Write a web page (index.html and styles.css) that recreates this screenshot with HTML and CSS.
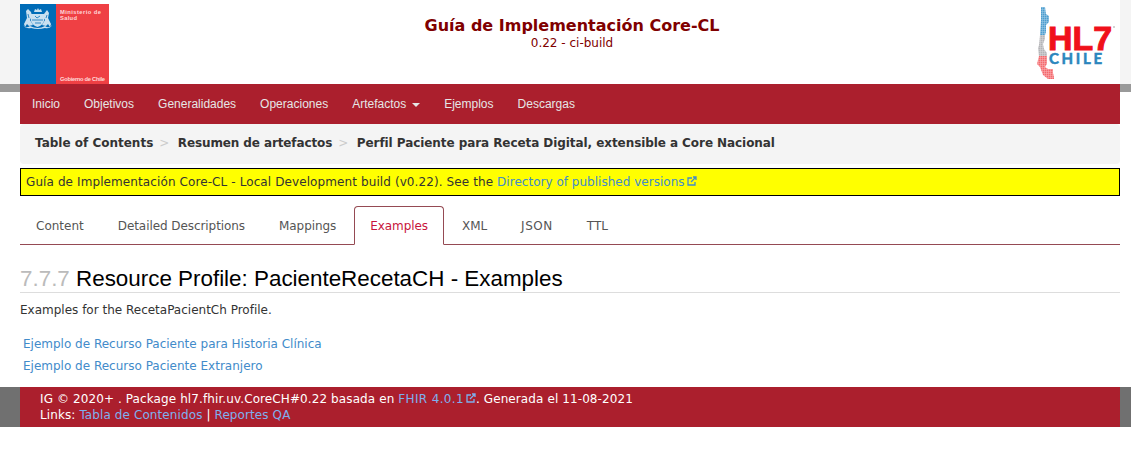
FILE: index.html
```html
<!DOCTYPE html>
<html lang="es">
<head>
<meta charset="utf-8">
<title>Guía de Implementación Core-CL</title>
<link rel="stylesheet" href="styles.css">
</head>
<body>
<div class="header-band">
  <header class="header">
    <svg class="gov-logo" width="89" height="80" viewBox="0 0 89 80">
      <rect width="36" height="80" fill="#006cb7"/>
      <rect x="36" width="53" height="80" fill="#ef4044"/>
      <g fill="#c9e0f0">
        <path d="M11 10h13v7q-1 4-6.500 6-5.500-2-6.500-6z"/>
        <path d="M14 8l1-3 2 1 1-2 1 2 2-1 1 3z"/>
        <path d="M4 20l3-6-1-7 2-2 3 3 1 4-2 4 3 5-4 1-2-2-2 3z"/>
        <path d="M31 20l-3-6 1-5 -2-3-3 4-1 3 2 3-3 5 4 1 2-2 2 3z"/>
        <path d="M3 21q3 4 7 1 8 4 15 0 4 3 7-1-2 4-7 3-7 2-14 0-5 1-8-3z"/>
      </g>
      <path d="M12 16h11M15 12l2 2 3-2M15 19h6M8 10l1 4M27 11l-1 3" stroke="#3288c4" fill="none"/>
      <g class="gov-text"><text x="40" y="10" textLength="41">Ministerio de</text><text x="40" y="16" textLength="17">Salud</text><text x="40" y="77" textLength="45">Gobierno de Chile</text></g>
    </svg>
    <div class="heading">
      <div class="title">Guía de Implementación Core-CL</div>
      <div class="version">0.22 - ci-build</div>
    </div>
    <svg class="hl7-logo" width="82" height="80" viewBox="-2 0 82 80">
      <defs>
        <pattern id="dots" width="2" height="2" patternUnits="userSpaceOnUse"><rect width="1.500" height="1.500" fill="#fff"/><rect width="2" height="2" fill="#fff" opacity=".5"/></pattern>
        <mask id="dotmask"><rect width="80" height="80" fill="url(#dots)"/></mask>
      </defs>
      <g mask="url(#dotmask)">
        <path d="M4 3h4l1 7 3 2v6l-3 3v7l-1 3H3l1-15z" fill="#4b9dcf"/>
        <path d="M3 31h5v4l-2 5 1 5 3 4v4H2l-1-9 1-3z" fill="#b3b3b6"/>
        <path d="M2 52h8v8l-2 3 3 2h5v4l1 4v2h-6l-5-4-3-8-3-3z" fill="#f4686c"/>
      </g>
      <text class="hl7-name" x="11" y="46" textLength="64" lengthAdjust="spacingAndGlyphs">HL7</text>
      <circle cx="77" cy="23" r=".8" fill="#999"/>
      <text class="hl7-country" x="12" y="60" textLength="53">CHILE</text>
    </svg>
  </header>
</div>
<div class="nav-band">
  <nav class="nav">
    <a>Inicio</a><a>Objetivos</a><a>Generalidades</a><a>Operaciones</a><a>Artefactos<span class="caret"></span></a><a>Ejemplos</a><a>Descargas</a>
  </nav>
</div>
<main class="content">
  <div class="breadcrumb"><b class="crumb-toc">Table of Contents</b><i>&gt;</i><b class="crumb-artifacts">Resumen de artefactos</b><i>&gt;</i><b class="crumb-page">Perfil Paciente para Receta Digital, extensible a Core Nacional</b></div>
  <p class="publish-box">Guía de Implementación Core-CL - Local Development build (v0.22). See the <a>Directory of published versions<svg class="external" viewBox="0 0 10 10"><path d="M5 2H1v7h7V6M4 6l5-5M6 1h3v3"/></svg></a></p>
  <div class="tabs"><a>Content</a><a class="tight">Detailed Descriptions</a><a class="tight">Mappings</a><a class="active tight">Examples</a><a class="tight">XML</a><a class="json">JSON</a><a>TTL</a></div>
  <h2><span class="number">7.7.7</span> Resource Profile: PacienteRecetaCH - Examples</h2>
  <p class="intro">Examples for the RecetaPacientCh Profile.</p>
  <div class="examples"><a>Ejemplo de Recurso Paciente para Historia Clínica</a><a>Ejemplo de Recurso Paciente Extranjero</a></div>
</main>
<div class="footer-band">
  <footer class="footer">
    <div>IG © 2020+ . Package hl7.fhir.uv.CoreCH#0.22 basada en <a class="spec-link">FHIR 4.0.1<svg class="external" viewBox="0 0 10 10"><path d="M5 2H1v7h7V6M4 6l5-5M6 1h3v3"/></svg></a>. Generada el 11-08-2021</div>
    <div>Links: <a>Tabla de Contenidos</a> | <a>Reportes QA</a></div>
  </footer>
</div>
</body>
</html>
```
FILE: styles.css
```css
* { box-sizing: border-box; }
body { margin: 0; background: #fff; color: #333; font: 12px/17px "DejaVu Sans", Verdana, sans-serif; }
.header-band { height: 84px; padding: 0 11px 0 20px; background: #f4f4f4; }
.header { height: 84px; padding-top: 4px; background: #fff; display: flex; }
.gov-logo { display: block; }
.gov-text { fill: #ffd9da; font: bold 5.800px "Liberation Sans", sans-serif; }
.heading { width: 926px; padding: 12px 0 0 0; text-align: center; color: #800000; }
.title { font-size: 16px; font-weight: bold; line-height: 20px; white-space: nowrap; }
.version { line-height: 14px; }
.hl7-name { fill: #f0101a; stroke: #f0101a; stroke-width: 1px; font: bold 33px "Liberation Sans", sans-serif; }
.hl7-country { fill: #2b86bd; stroke: #2b86bd; stroke-width: .5px; font: bold 15px Lato, sans-serif; }
.nav-band { height: 40px; padding: 0 11px 0 20px; background: linear-gradient(#999 8px, #fff 8px); }
.nav { height: 40px; background: #ab1f2d; display: flex; color: #e6e6e6; font: 12px/40px "Liberation Sans", Arial, sans-serif; }
.nav a { padding: 0 12px; }
.caret { display: inline-block; margin-left: 6px; border: 4px solid transparent; border-top-color: #e6e6e6; border-bottom: 0; vertical-align: middle; }
.content { margin: 0 11px 0 20px; height: 263px; }
.breadcrumb { height: 40px; padding: 11px 15px 9px; border-radius: 4px; background: #f4f4f4; display: flex; white-space: nowrap; }
.breadcrumb i { width: 24.500px; padding-left: 6px; color: #ccc; font-style: normal; }
.crumb-artifacts { letter-spacing: -.11px; }
.crumb-page { letter-spacing: -.07px; }
.publish-box { height: 28px; margin: 4px 0 10px; padding: 5px; border: 1px solid #000; background: #ff0; white-space: nowrap; letter-spacing: .1px; }
.publish-box a { letter-spacing: .02px; }
a { text-decoration: none; }
.publish-box a, .examples a { color: #428bca; }
.external { width: 10px; height: 10px; margin-left: 2px; fill: none; stroke: currentColor; stroke-width: 1.300; }
.tabs { height: 39px; border-bottom: 1px solid #954a53; display: flex; gap: 2px; color: #555; }
.tabs a { height: 39px; padding: 11px 15px; border: 1px solid transparent; border-radius: 4px 4px 0 0; }
.tabs .tight { letter-spacing: -.07px; }
.tabs .json { letter-spacing: .55px; }
.tabs .active { border-color: #954a53; border-bottom-color: #fff; background: #fff; color: #c8143c; }
h2 { height: 29px; margin: 19px 0 0; border-bottom: 1px solid #ddd; color: #000; font: 22.400px/29px "Liberation Sans", Arial, sans-serif; white-space: nowrap; }
.number { color: #bbb; }
.intro { margin: 9px 0 14px; }
.examples { padding: 0 3px; display: flex; flex-direction: column; line-height: 22px; }
.footer-band { height: 40px; padding: 0 11px 0 20px; background: #707070; }
.footer { height: 40px; padding: 4px 20px; background: #ab1f2d; color: #fff; line-height: 16px; letter-spacing: .1px; white-space: nowrap; }
.footer a { color: #7eb0ee; }
.footer .spec-link { letter-spacing: .35px; }
```
